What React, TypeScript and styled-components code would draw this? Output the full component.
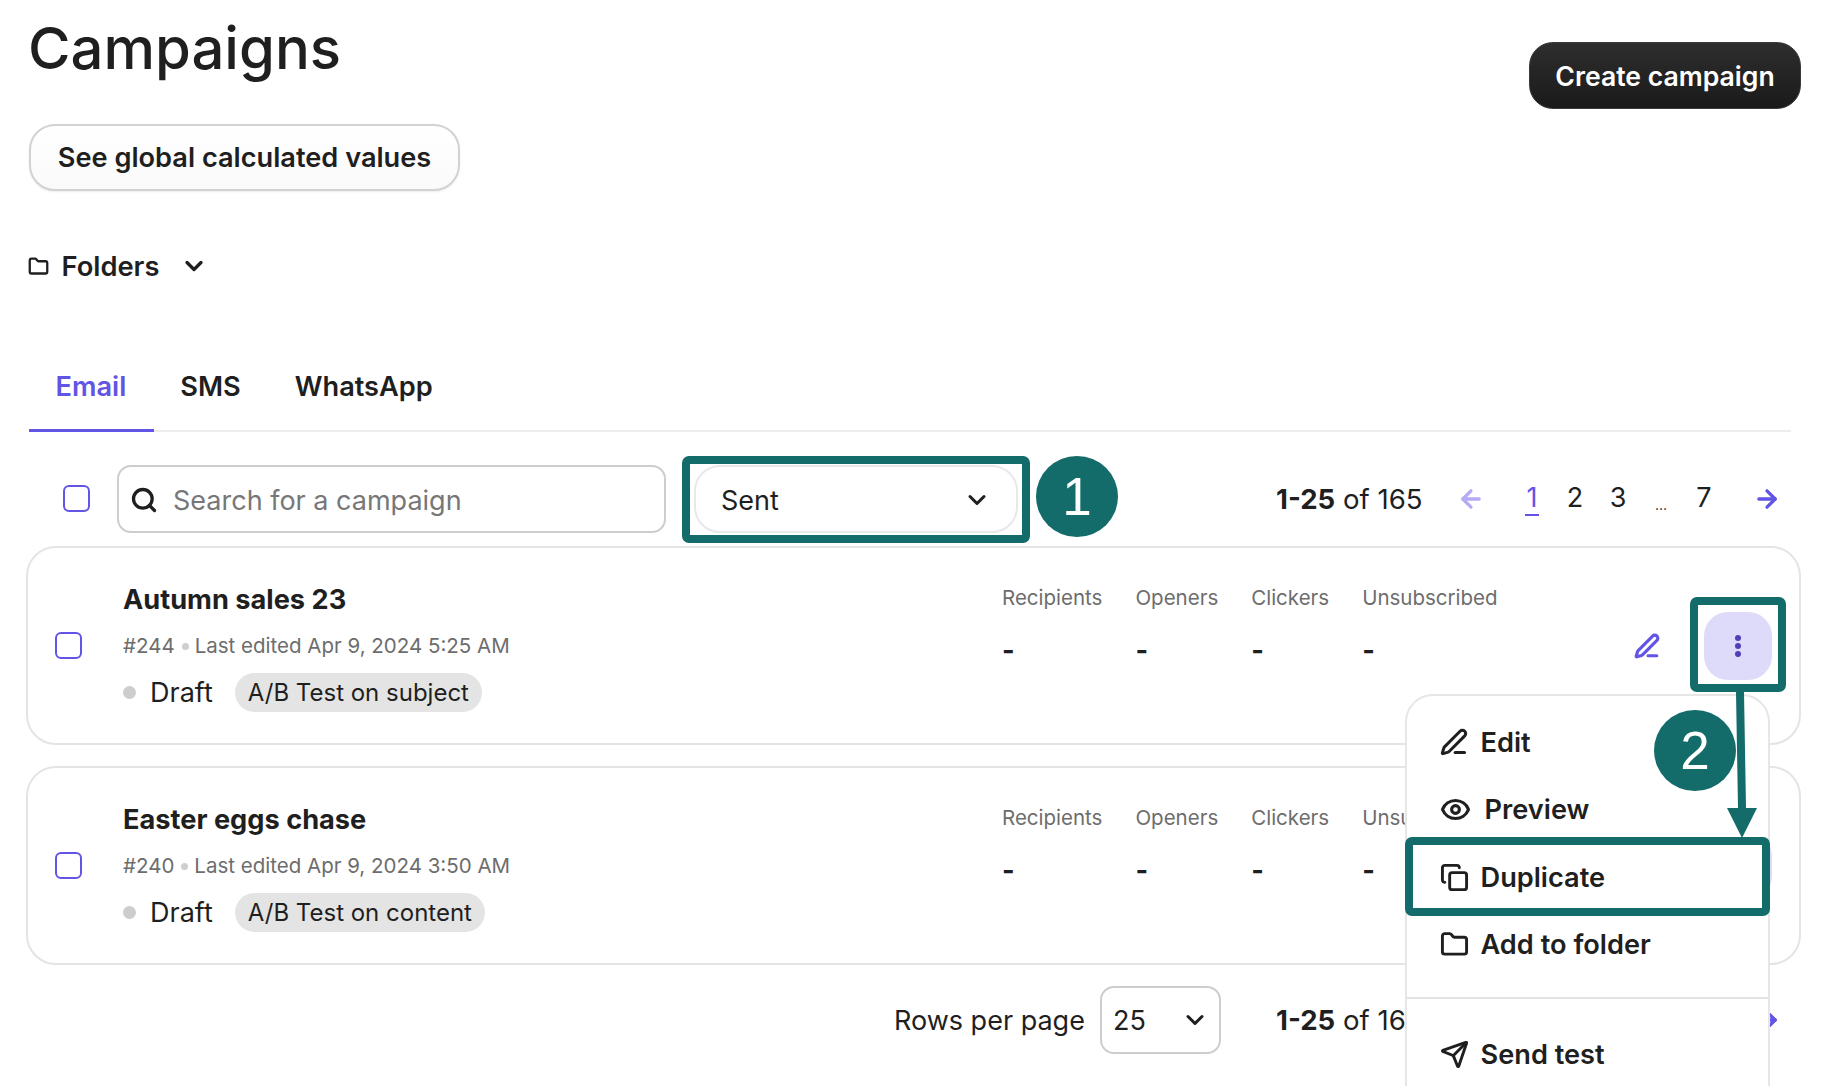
import React from 'react'
import styled, { createGlobalStyle } from 'styled-components'
import {
  ArrowLeft,
  ArrowRight,
  ChevronDown,
  Copy,
  Eye,
  Folder,
  PenLine,
  Search,
  Send,
} from 'lucide-react'

const INK = '#1f1f1f'
const PURPLE = '#6254e4'
const TEAL = '#136b6a'

const GlobalStyle = createGlobalStyle`
  html, body {
    margin: 0;
    background: #fff;
  }
  body {
    font-family: Inter, "Liberation Sans", sans-serif;
    color: ${INK};
  }
  * {
    box-sizing: border-box;
  }
`

const Page = styled.div`
  position: relative;
  width: 1834px;
  height: 1086px;
  overflow: hidden;
  padding-left: 27px;
`

const Header = styled.header`
  display: flex;
  justify-content: space-between;
  align-items: flex-start;
  padding: 16px 33px 0 2px;
`

const Title = styled.h1`
  margin: 0 0 0 -1px;
  font-size: 58px;
  line-height: 64px;
  font-weight: 500;
`

const GhostButton = styled.button`
  display: block;
  margin-top: 44px;
  width: 431px;
  height: 67px;
  border: 2px solid #d2d2d2;
  border-radius: 26px;
  background: linear-gradient(#ffffff, #fafafa);
  box-shadow: 0 1px 2px rgba(0, 0, 0, 0.08);
  font: 600 27.2px Inter, sans-serif;
  color: ${INK};
`

const DarkButton = styled.button`
  width: 272px;
  height: 67px;
  margin-top: 26px;
  border: 1px solid #3a3a3a;
  border-radius: 24px;
  background: linear-gradient(#2e2e2e, #1a1a1a);
  color: #fff;
  font: 600 26.6px Inter, sans-serif;
`

const FolderRow = styled.div`
  display: flex;
  align-items: center;
  margin: 59px 0 0 1px;
  height: 32px;
  font-size: 27.3px;
  font-weight: 600;
`

const FolderName = styled.span`
  margin: 0 21px 0 12.5px;
`

const Tabs = styled.nav`
  display: flex;
  margin: 77px 0 0 2px;
  width: 1762px;
  height: 73px;
  border-bottom: 2px solid #ededed;
`

const Tab = styled.div<{ $active?: boolean }>`
  display: flex;
  align-items: center;
  height: 73px;
  padding: 0 27.5px 16px 26.5px;
  font-size: 27.2px;
  font-weight: 600;
  color: ${(p) => (p.$active ? PURPLE : INK)};
  border-bottom: ${(p) => (p.$active ? `3px solid ${PURPLE}` : '3px solid transparent')};
`

const Toolbar = styled.div`
  display: flex;
  align-items: center;
  margin: 33px 0 0 2px;
  height: 67px;
`

const Checkbox = styled.span<{ $left: number }>`
  display: block;
  flex: none;
  width: 27px;
  height: 27px;
  margin-left: ${(p) => p.$left}px;
  border: 2px solid ${PURPLE};
  border-radius: 6px;
`

const SearchBox = styled.div`
  display: flex;
  align-items: center;
  align-self: flex-start;
  gap: 15px;
  width: 549px;
  height: 68px;
  margin-left: 27px;
  padding: 2px 0 0 11px;
  border: 2px solid #cdcdcd;
  border-radius: 14px;
  font-size: 27px;
  color: #777;
`

const StatusSelect = styled.div`
  display: flex;
  align-items: center;
  align-self: flex-start;
  justify-content: space-between;
  width: 324px;
  height: 68px;
  margin-left: 28px;
  padding: 2px 25px 0 25px;
  border: 2px solid #e8e8e8;
  border-radius: 26px;
  font-size: 27px;
`

const ToolbarPagination = styled.div`
  margin-left: 258px;
`

const PaginationWrap = styled.div`
  display: flex;
  align-items: center;
  height: 40px;
`

const Range = styled.span`
  width: 181px;
  font-size: 27.6px;
  b {
    font-weight: 700;
  }
`

const PageNumbers = styled.div`
  display: flex;
  margin: 0 27px 0 25.5px;
`

const PageNumber = styled.span<{ $active?: boolean }>`
  display: flex;
  justify-content: center;
  width: 43px;
  font-size: 27px;
  line-height: 32px;
  color: ${(p) => (p.$active ? PURPLE : INK)};
  span {
    border-bottom: ${(p) => (p.$active ? `2px solid ${PURPLE}` : 'none')};
    padding: 0 2px;
  }
`

const Dots = styled.span`
  display: flex;
  justify-content: center;
  align-items: flex-end;
  width: 43px;
  height: 32px;
  font-size: 14px;
  line-height: 18px;
`

const Card = styled.article<{ $top: number }>`
  display: flex;
  align-items: center;
  width: 1775px;
  height: 199px;
  margin: ${(p) => p.$top}px 0 0 -1px;
  padding: 0 27px 0 27px;
  border: 2px solid #e4e4e4;
  border-radius: 30px;
  background: #fff;
`

const CardInfo = styled.div`
  width: 879px;
  margin-left: 41px;
  margin-top: 4px;
`

const CardTitle = styled.div`
  font-size: 27.2px;
  line-height: 34px;
  font-weight: 700;
`

const Meta = styled.div`
  margin-top: 16px;
  font-size: 20.5px;
  line-height: 26px;
  color: #6d6d6d;
`

const MetaDot = styled.span`
  display: inline-block;
  width: 7px;
  height: 7px;
  margin: 0 6px 3px 7px;
  border-radius: 50%;
  background: #cfcfcf;
`

const StatusRow = styled.div`
  display: flex;
  align-items: center;
  margin-top: 14px;
  font-size: 27px;
`

const StatusDot = styled.span`
  width: 13px;
  height: 13px;
  margin-right: 14px;
  border-radius: 50%;
  background: #cdcdcd;
`

const Pill = styled.span`
  margin-left: 22px;
  height: 39px;
  padding: 0 13px;
  border-radius: 20px;
  background: #e4e4e4;
  font-size: 24px;
  line-height: 39px;
`

const Stats = styled.div`
  display: flex;
  gap: 33px;
  align-self: flex-start;
  margin-top: 37px;
`

const Stat = styled.div`
  font-size: 20.5px;
  line-height: 26px;
  color: #6d6d6d;
  strong {
    display: block;
    margin-top: 26px;
    font-size: 27px;
    line-height: 28px;
    font-weight: 700;
    color: ${INK};
  }
`

const Actions = styled.div`
  display: flex;
  align-items: center;
  gap: 44px;
  margin-left: auto;
`

const KebabPad = styled.div`
  display: flex;
  align-items: center;
  justify-content: center;
  width: 68px;
  height: 68px;
  border-radius: 24px;
  background: #dedafa;
`

const Footer = styled.div`
  display: flex;
  align-items: center;
  height: 68px;
  margin-top: 21px;
  padding-left: 867px;
`

const RowsLabel = styled.span`
  width: 206px;
  font-size: 27px;
`

const RowsSelect = styled.div`
  display: flex;
  align-items: center;
  justify-content: space-between;
  width: 120.5px;
  height: 68px;
  margin-right: 55.5px;
  padding: 0 9.5px 0 11px;
  border: 2px solid #cdcdcd;
  border-radius: 14px;
  font-size: 27px;
`

const Menu = styled.div`
  position: absolute;
  left: 1405px;
  top: 694px;
  width: 365px;
  height: 440px;
  padding-top: 12.5px;
  border: 2px solid #e6e6e6;
  border-radius: 28px;
  background: #fff;
`

const MenuItem = styled.div<{ $gap?: number }>`
  display: flex;
  align-items: center;
  gap: ${(p) => p.$gap ?? 12}px;
  height: 67.5px;
  padding-left: 32.5px;
  font-size: 27.2px;
  font-weight: 600;
`

const MenuDivider = styled.div`
  height: 2px;
  margin: 18px 0 22px;
  background: #e3e3e3;
`

const Callout = styled.div<{ $x: number; $y: number; $w: number; $h: number }>`
  position: absolute;
  left: ${(p) => p.$x}px;
  top: ${(p) => p.$y}px;
  width: ${(p) => p.$w}px;
  height: ${(p) => p.$h}px;
  border: 8px solid ${TEAL};
  border-radius: 7px;
`

const NumberBadge = styled.div<{ $x: number; $y: number }>`
  position: absolute;
  left: ${(p) => p.$x}px;
  top: ${(p) => p.$y}px;
  display: flex;
  align-items: center;
  justify-content: center;
  width: 82px;
  height: 81px;
  border-radius: 50%;
  background: ${TEAL};
  color: #fff;
  font: 400 53px 'Liberation Sans', sans-serif;
`

const Arrow = styled.svg`
  position: absolute;
  left: 1722px;
  top: 690px;
`

const Pagination = () => (
  <PaginationWrap>
    <Range>
      <b>1-25</b> of 165
    </Range>
    <ArrowLeft size={28} color="#b4abf5" strokeWidth={2.8} />
    <PageNumbers>
      <PageNumber $active>
        <span>1</span>
      </PageNumber>
      <PageNumber>2</PageNumber>
      <PageNumber>3</PageNumber>
      <Dots>...</Dots>
      <PageNumber>7</PageNumber>
    </PageNumbers>
    <ArrowRight size={28} color={PURPLE} strokeWidth={2.8} />
  </PaginationWrap>
)

const campaigns = [
  {
    name: 'Autumn sales 23',
    id: '#244',
    edited: 'Last edited Apr 9, 2024 5:25 AM',
    test: 'A/B Test on subject',
    top: 14,
  },
  {
    name: 'Easter eggs chase',
    id: '#240',
    edited: 'Last edited Apr 9, 2024 3:50 AM',
    test: 'A/B Test on content',
    top: 21,
  },
]

const statNames = ['Recipients', 'Openers', 'Clickers', 'Unsubscribed']

export default function App() {
  return (
    <Page>
      <GlobalStyle />
      <Header>
        <div>
          <Title>Campaigns</Title>
          <GhostButton>See global calculated values</GhostButton>
        </div>
        <DarkButton>Create campaign</DarkButton>
      </Header>

      <FolderRow>
        <Folder size={21} strokeWidth={2.6} />
        <FolderName>Folders</FolderName>
        <ChevronDown size={28} strokeWidth={2.8} />
      </FolderRow>

      <Tabs>
        <Tab $active>Email</Tab>
        <Tab>SMS</Tab>
        <Tab>WhatsApp</Tab>
      </Tabs>

      <Toolbar>
        <Checkbox $left={34} />
        <SearchBox>
          <Search size={28} color={INK} strokeWidth={2.8} />
          Search for a campaign
        </SearchBox>
        <StatusSelect>
          Sent
          <ChevronDown size={28} strokeWidth={2.6} />
        </StatusSelect>
        <ToolbarPagination>
          <Pagination />
        </ToolbarPagination>
      </Toolbar>

      {campaigns.map((c) => (
        <Card key={c.id} $top={c.top}>
          <Checkbox $left={0} />
          <CardInfo>
            <CardTitle>{c.name}</CardTitle>
            <Meta>
              {c.id}
              <MetaDot />
              {c.edited}
            </Meta>
            <StatusRow>
              <StatusDot />
              Draft
              <Pill>{c.test}</Pill>
            </StatusRow>
          </CardInfo>
          <Stats>
            {statNames.map((s) => (
              <Stat key={s}>
                {s}
                <strong>-</strong>
              </Stat>
            ))}
          </Stats>
          <Actions>
            <PenLine size={26} color={PURPLE} strokeWidth={2.9} />
            <KebabPad>
              <svg width="8" height="24" viewBox="0 0 8 24" fill="#4f3fb8">
                <circle cx="4" cy="4" r="3" />
                <circle cx="4" cy="12" r="3" />
                <circle cx="4" cy="20" r="3" />
              </svg>
            </KebabPad>
          </Actions>
        </Card>
      ))}

      <Footer>
        <RowsLabel>Rows per page</RowsLabel>
        <RowsSelect>
          25
          <ChevronDown size={28} strokeWidth={2.6} />
        </RowsSelect>
        <Pagination />
      </Footer>

      <Menu>
        <MenuItem $gap={13}>
          <PenLine size={28} strokeWidth={2.6} />
          Edit
        </MenuItem>
        <MenuItem $gap={14}>
          <Eye size={31} strokeWidth={2.4} />
          Preview
        </MenuItem>
        <MenuItem>
          <Copy size={29} strokeWidth={2.4} />
          Duplicate
        </MenuItem>
        <MenuItem>
          <Folder size={29} strokeWidth={2.4} />
          Add to folder
        </MenuItem>
        <MenuDivider />
        <MenuItem>
          <Send size={29} strokeWidth={2.4} />
          Send test
        </MenuItem>
      </Menu>

      <Callout $x={682} $y={456} $w={348} $h={87} />
      <NumberBadge $x={1036} $y={456}>1</NumberBadge>
      <Callout $x={1690} $y={597} $w={96} $h={95} />
      <NumberBadge $x={1654} $y={710}>2</NumberBadge>
      <Callout $x={1405} $y={837} $w={365} $h={79} />
      <Arrow width="36" height="150" viewBox="0 0 36 150">
        <path d="M14 2 L22 2 L24 118 L35 118 L20 148 L5 118 L16 118 Z" fill={TEAL} />
      </Arrow>
    </Page>
  )
}
